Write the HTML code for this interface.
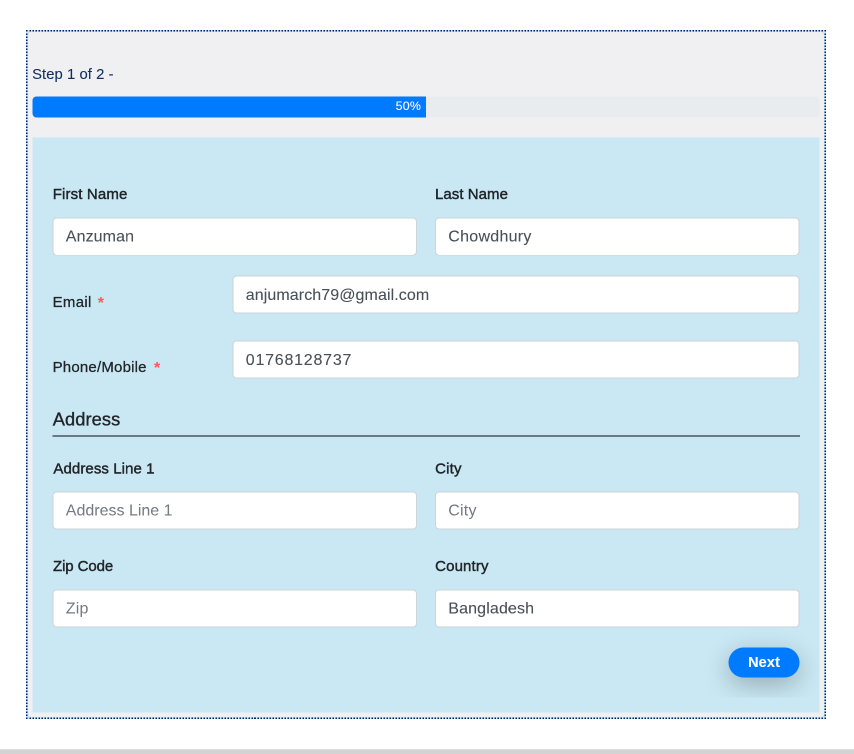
<!DOCTYPE html>
<html lang="en">
<head>
<meta charset="utf-8">
<title>Step 1 of 2</title>
<style>
html,body{margin:0;padding:0;width:854px;height:754px;overflow:hidden;background:#fff}
#w{position:absolute;left:0;top:0;width:1708px;height:1508px;transform:scale(0.5);transform-origin:0 0;will-change:transform;font-family:"Liberation Sans", Arial, sans-serif;overflow:hidden}
#w *{position:absolute;box-sizing:border-box;margin:0;padding:0;border:0;font-weight:normal;font-family:inherit}
.t{line-height:1;white-space:nowrap}
.strip{background:#d3d3d3}
.strip2{background:#dcdcdc}
#w .outer{background:#c9e8f3;border:3px dotted #002068}
.gray{background:#f0f0f2;border-radius:7px}
.step{color:#0f2f5f;-webkit-text-stroke:0.2px #0f2f5f}
.prog{background:#e9ecef;border-radius:8px}
.bar{background:#007bff;border-radius:8px 0 0 8px}
.pct{color:#fff;-webkit-text-stroke:0.2px #fff;letter-spacing:0.4px}
.panel{background:#c9e8f3}
.clip{overflow:hidden}
#w .btn{color:#fff;font-weight:bold;line-height:1;text-align:center;white-space:nowrap;-webkit-text-stroke:0.24px #fff;background:#007bff;box-shadow:0 14px 50px rgba(0,0,0,.26)}
#w .inp{background:#fff;border:2px solid #ced4da;border-radius:8px}
.val{color:#495057;-webkit-text-stroke:0.2px #495057}
.ph{color:#727b84}
.lab{color:#212529;-webkit-text-stroke:0.84px #212529}
.lab2{color:#212529;-webkit-text-stroke:0.52px #212529}
#w .req{color:#ff5757;font-weight:bold}
.h{color:#212529;-webkit-text-stroke:0.68px #212529}
.hr{background:#6a7982}
</style>
</head>
<body>
<div id="w">
<div class="strip" style="left:0px;top:1498px;width:1708px;height:10px;"></div>
<div class="strip2" style="left:0px;top:1498px;width:1708px;height:2px;"></div>
<div class="outer" style="left:52px;top:60px;width:1600.4px;height:1378px;"></div>
<div class="gray" style="left:56px;top:64px;width:1592.4px;height:1370px;"></div>
<div class="t step" style="left:64.2px;top:132.94px;font-size:29.6px;letter-spacing:0.14px;">Step 1 of 2 -</div>
<div class="prog" style="left:65px;top:192.8px;width:1574px;height:42px;"></div>
<div class="bar" style="left:65px;top:192.8px;width:787px;height:42px;"></div>
<div class="t pct" style="right:865.8px;top:200.01px;font-size:24.8px;">50%</div>
<div class="panel" style="left:65px;top:275px;width:1574px;height:1149.8px;"></div>
<div class="clip" style="left:65px;top:275px;width:1574px;height:1120px">
<button type="button" class="btn" style="left:1392px;top:1020px;width:142px;height:59.8px;border-radius:30.4px;font-size:28.8px;letter-spacing:0.4px;padding:0 0 1.8px 0.4px">Next</button>
</div>
<label class="t lab" style="left:105.4px;top:373.41px;font-size:30px;letter-spacing:0.3px;">First Name</label>
<label class="t lab" style="left:870px;top:373.41px;font-size:30px;letter-spacing:0.1px;">Last Name</label>
<div class="inp" style="left:105px;top:434.8px;width:729px;height:76px;"></div>
<div class="t val" style="left:131.6px;top:456.11px;font-size:32px;letter-spacing:0.2px;">Anzuman</div>
<div class="inp" style="left:870px;top:434.8px;width:729px;height:76px;"></div>
<div class="t val" style="left:896.6px;top:456.11px;font-size:32px;letter-spacing:0.54px;">Chowdhury</div>
<label class="t lab2" style="left:105.2px;top:589.4px;font-size:30px;letter-spacing:0.6px;">Email</label>
<span class="t req" style="left:195.6px;top:588.51px;font-size:32px;">*</span>
<div class="inp" style="left:465px;top:551.2px;width:1134px;height:76px;"></div>
<div class="t val" style="left:491.6px;top:572.51px;font-size:32px;letter-spacing:0.17px;">anjumarch79@gmail.com</div>
<label class="t lab2" style="left:105.2px;top:719.4px;font-size:30px;letter-spacing:0.4px;">Phone/Mobile</label>
<span class="t req" style="left:308px;top:718.51px;font-size:32px;">*</span>
<div class="inp" style="left:465px;top:681.2px;width:1134px;height:76px;"></div>
<div class="t val" style="left:491.6px;top:702.51px;font-size:32px;letter-spacing:1.54px;">01768128737</div>
<h4 class="t h" style="left:105.4px;top:820.9px;font-size:36.5px;letter-spacing:0.2px;">Address</h4>
<hr class="hr" style="left:104.6px;top:870px;width:1495px;height:4px;">
<label class="t lab" style="left:106.8px;top:921.61px;font-size:30px;letter-spacing:0.16px;">Address Line 1</label>
<label class="t lab" style="left:870.2px;top:921.61px;font-size:30px;letter-spacing:0.4px;">City</label>
<div class="inp" style="left:105px;top:982.8px;width:729px;height:76px;"></div>
<div class="t ph" style="left:131.6px;top:1004.11px;font-size:32px;">Address Line 1</div>
<div class="inp" style="left:870px;top:982.8px;width:729px;height:76px;"></div>
<div class="t ph" style="left:896.6px;top:1004.11px;font-size:32px;letter-spacing:0.4px;">City</div>
<label class="t lab" style="left:106px;top:1117.4px;font-size:30px;letter-spacing:-0.2px;">Zip Code</label>
<label class="t lab" style="left:870.2px;top:1117.4px;font-size:30px;letter-spacing:0.3px;">Country</label>
<div class="inp" style="left:105px;top:1179px;width:729px;height:76px;"></div>
<div class="t ph" style="left:131.6px;top:1200.31px;font-size:32px;letter-spacing:0.4px;">Zip</div>
<div class="inp" style="left:870px;top:1179px;width:729px;height:76px;"></div>
<div class="t val" style="left:896.6px;top:1200.31px;font-size:32px;letter-spacing:0.28px;">Bangladesh</div>
</div>
</body>
</html>
